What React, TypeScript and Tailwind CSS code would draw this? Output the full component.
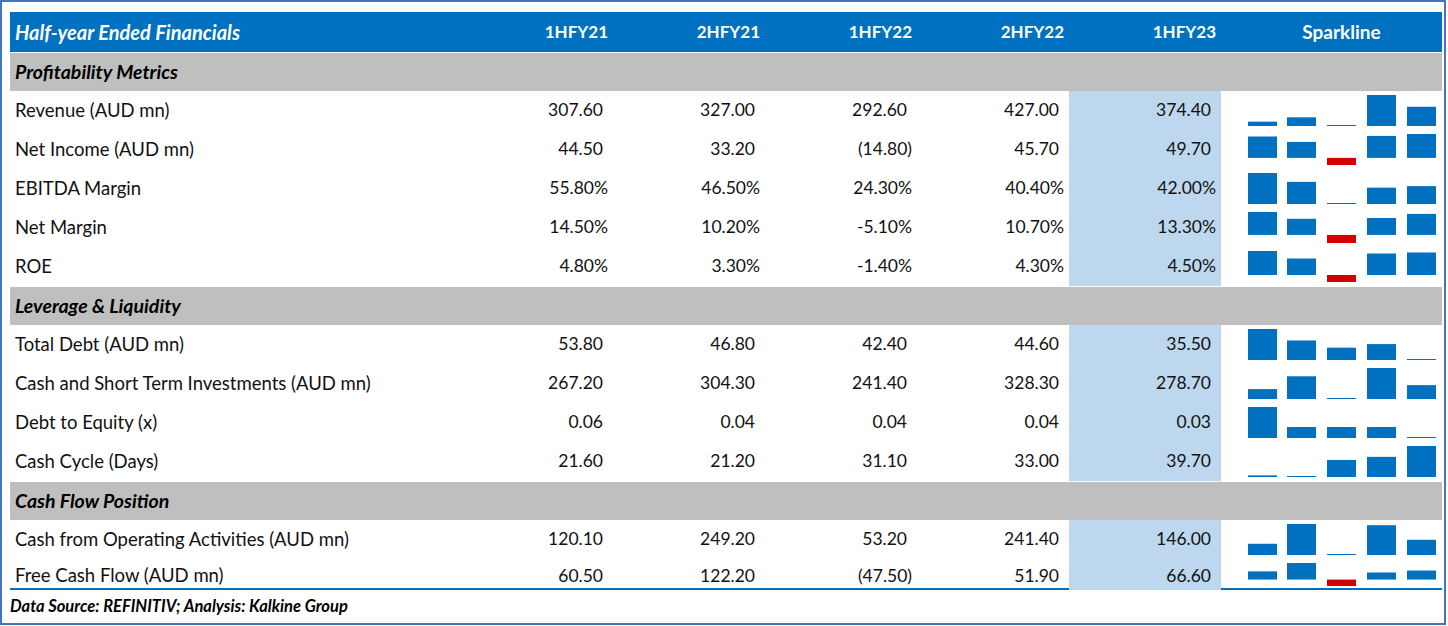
type Row =
  | { kind: "section"; label: string }
  | { kind: "data"; label: string; values: string[]; nums: number[] };

const rows: Row[] = [
  { kind: "section", label: "Profitability Metrics" },
  { kind: "data", label: "Revenue (AUD mn)", values: ["307.60", "327.00", "292.60", "427.00", "374.40"], nums: [307.6, 327, 292.6, 427, 374.4] },
  { kind: "data", label: "Net Income (AUD mn)", values: ["44.50", "33.20", "(14.80)", "45.70", "49.70"], nums: [44.5, 33.2, -14.8, 45.7, 49.7] },
  { kind: "data", label: "EBITDA Margin", values: ["55.80%", "46.50%", "24.30%", "40.40%", "42.00%"], nums: [55.8, 46.5, 24.3, 40.4, 42] },
  { kind: "data", label: "Net Margin", values: ["14.50%", "10.20%", "-5.10%", "10.70%", "13.30%"], nums: [14.5, 10.2, -5.1, 10.7, 13.3] },
  { kind: "data", label: "ROE", values: ["4.80%", "3.30%", "-1.40%", "4.30%", "4.50%"], nums: [4.8, 3.3, -1.4, 4.3, 4.5] },
  { kind: "section", label: "Leverage & Liquidity" },
  { kind: "data", label: "Total Debt (AUD mn)", values: ["53.80", "46.80", "42.40", "44.60", "35.50"], nums: [53.8, 46.8, 42.4, 44.6, 35.5] },
  { kind: "data", label: "Cash and Short Term Investments (AUD mn)", values: ["267.20", "304.30", "241.40", "328.30", "278.70"], nums: [267.2, 304.3, 241.4, 328.3, 278.7] },
  { kind: "data", label: "Debt to Equity (x)", values: ["0.06", "0.04", "0.04", "0.04", "0.03"], nums: [0.06, 0.04, 0.04, 0.04, 0.03] },
  { kind: "data", label: "Cash Cycle (Days)", values: ["21.60", "21.20", "31.10", "33.00", "39.70"], nums: [21.6, 21.2, 31.1, 33, 39.7] },
  { kind: "section", label: "Cash Flow Position" },
  { kind: "data", label: "Cash from Operating Activities (AUD mn)", values: ["120.10", "249.20", "53.20", "241.40", "146.00"], nums: [120.1, 249.2, 53.2, 241.4, 146] },
  { kind: "data", label: "Free Cash Flow (AUD mn)", values: ["60.50", "122.20", "(47.50)", "51.90", "66.60"], nums: [60.5, 122.2, -47.5, 51.9, 66.6] },
];

const periods = ["1HFY21", "2HFY21", "1HFY22", "2HFY22", "1HFY23"];

function Sparkline({ nums, height, chart }: { nums: number[]; height: number; chart: number }) {
  const max = Math.max(...nums);
  const min = Math.min(...nums);
  const top = 4;
  const xs = [27, 66, 106, 146, 186];
  const mixed = min < 0;
  const zero = top + (max / (max - min)) * chart;
  return (
    <svg width="221" height={height} className="block">
      {nums.map((v, i) => {
        let y: number;
        let h: number;
        if (mixed) {
          h = (Math.abs(v) / (max - min)) * chart;
          y = v >= 0 ? zero - h : zero;
        } else {
          h = 1 + ((v - min) / (max - min)) * (chart - 1);
          y = top + chart - h;
        }
        return (
          <rect
            key={i}
            x={xs[i]}
            y={y}
            width="29"
            height={h}
            fill={v < 0 ? "#d40000" : "#0070c0"}
          />
        );
      })}
    </svg>
  );
}

function Cell({ value, highlight, last }: { value: string; highlight?: boolean; last?: boolean }) {
  const tight = value.endsWith("%") || value.startsWith("(");
  return (
    <div
      className={`flex items-center justify-end text-[17.5px] ${tight ? "pr-[5px]" : "pr-[10px]"} ${highlight ? "bg-[#bdd7ee]" : ""} ${last ? "pt-[3px]" : ""}`}
    >
      {value}
    </div>
  );
}

export default function App() {
  return (
    <div className="w-[1448px] h-[626px] bg-white font-['Lato',sans-serif]">
      <div className="w-[1446px] h-[625px] border-2 border-[#4472c4] pl-[8px] pt-[10px]">
        <div className="w-[1432px] text-[18.5px] text-[#111]">
          <div className="grid grid-cols-[451px_repeat(5,152px)_221px] h-[40px] bg-[#0070c0] text-white font-bold text-[17px]">
            <div className="flex items-center pl-[5px] italic text-[20px]">Half-year Ended Financials</div>
            {periods.map((p) => (
              <div key={p} className="flex items-center justify-end pr-[5px]">
                {p}
              </div>
            ))}
            <div className="flex items-center justify-center pl-[20px] text-[19px]">Sparkline</div>
          </div>
          {rows.map((r, idx) => {
            if (r.kind === "section") {
              return (
                <div
                  key={r.label}
                  className="h-[39px] border-t border-white bg-[#bfbfbf] flex items-center pl-[5px] font-bold italic text-black text-[19.5px]"
                >
                  {r.label}
                </div>
              );
            }
            const last = idx === rows.length - 1;
            const h = last ? 29 : 39;
            return (
              <div
                key={r.label}
                className={`grid grid-cols-[451px_repeat(5,152px)_221px] ${last ? "h-[29px]" : "h-[39px]"}`}
              >
                <div className={`flex items-center pl-[5px] ${last ? "pt-[3px]" : ""}`}>{r.label}</div>
                {r.values.map((v, i) => (
                  <Cell key={i} value={v} highlight={i === 4} last={last} />
                ))}
                <Sparkline nums={r.nums} height={h} chart={last ? 23 : 31} />
              </div>
            );
          })}
          <div className="h-[2px] bg-[#0070c0]" />
          <div className="h-[33px] flex items-center text-[16.5px] font-bold italic text-black">
            Data Source: REFINITIV; Analysis: Kalkine Group
          </div>
        </div>
      </div>
    </div>
  );
}
